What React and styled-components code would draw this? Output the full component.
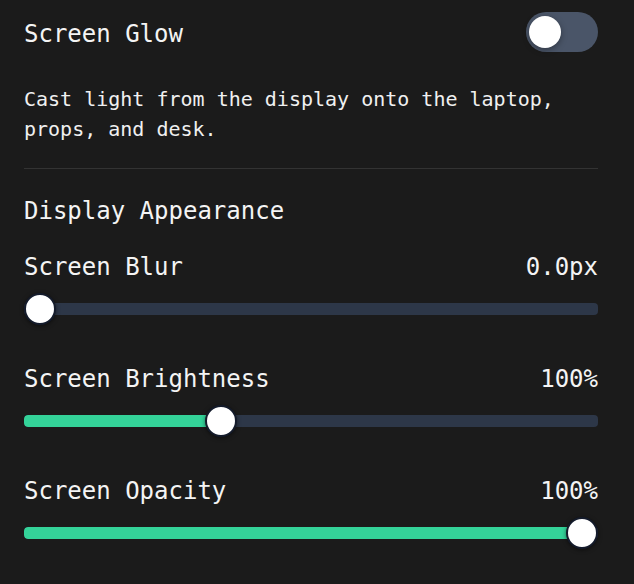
import React, { useState } from "react";
import styled, { createGlobalStyle } from "styled-components";

const Global = createGlobalStyle`
  html, body { margin: 0; padding: 0; background: #1b1b1b; }
  body { font-family: "DejaVu Sans Mono", "Liberation Mono", monospace; color: #f2f2f2; }
`;

const Panel = styled.div`
  width: 634px;
  min-height: 584px;
  box-sizing: border-box;
  padding: 12px 36px 0 24px;
  background: #1b1b1b;
  display: flex;
  flex-direction: column;
`;

const ToggleRow = styled.div`
  display: flex;
  align-items: center;
  justify-content: space-between;
  height: 40px;
`;

const Label = styled.span`
  font-size: 24px;
  line-height: 30px;
  color: #f4f4f4;
  white-space: pre;
`;

const ToggleLabel = styled(Label)`
  padding-top: 3px;
`;

const Switch = styled.button`
  position: relative;
  width: 72px;
  height: 40px;
  border-radius: 20px;
  border: none;
  padding: 0;
  background: ${(p) => (p.$on ? "#34d399" : "#4a5568")};
  cursor: pointer;
`;

const Knob = styled.span`
  position: absolute;
  top: 4px;
  left: ${(p) => (p.$on ? "36px" : "3px")};
  width: 32px;
  height: 32px;
  border-radius: 50%;
  background: #ffffff;
  box-shadow: 0 2px 6px rgba(0, 0, 0, 0.35);
`;

const Description = styled.p`
  margin: 32px 0 0;
  font-size: 20px;
  line-height: 30px;
  color: #f0f0f0;
`;

const Divider = styled.hr`
  margin: 24px 0 0;
  border: none;
  height: 1px;
  background: #333333;
`;

const SectionTitle = styled.h3`
  margin: 27px 0 0;
  font-weight: normal;
  font-size: 24px;
  line-height: 30px;
  color: #f4f4f4;
`;

const Group = styled.div`
  display: flex;
  flex-direction: column;
  margin-top: ${(p) => p.$top}px;
`;

const LabelRow = styled.div`
  display: flex;
  justify-content: space-between;
  align-items: center;
  height: 30px;
`;

const Value = styled.span`
  font-size: 24px;
  line-height: 30px;
  color: #f4f4f4;
`;

const SliderBox = styled.div`
  position: relative;
  height: 32px;
  margin-top: 11px;
  display: flex;
  align-items: center;
`;

const Track = styled.div`
  position: relative;
  width: 100%;
  height: 12px;
  border-radius: 4px;
  background: #2d3748;
  overflow: hidden;
`;

const Fill = styled.div`
  height: 100%;
  background: #34d399;
  border-radius: 4px 0 0 4px;
`;

const Thumb = styled.div`
  position: absolute;
  top: 0;
  width: 32px;
  height: 32px;
  box-sizing: border-box;
  border-radius: 50%;
  background: #ffffff;
  border: 2px solid #141b2b;
  box-shadow: 0 1px 4px rgba(0, 0, 0, 0.5);
  transform: translateX(-50%);
`;

const WIDTH = 574;
const THUMB = 32;

function Slider({ label, value, min, max, format, top }) {
  const frac = (value - min) / (max - min);
  const center = THUMB / 2 + (WIDTH - THUMB) * frac;
  return (
    <Group $top={top}>
      <LabelRow>
        <Label>{label}</Label>
        <Value>{format(value)}</Value>
      </LabelRow>
      <SliderBox>
        <Track>
          <Fill style={{ width: frac === 0 ? 0 : center }} />
        </Track>
        <Thumb style={{ left: center }} />
      </SliderBox>
    </Group>
  );
}

export default function App() {
  const [on, setOn] = useState(false);
  return (
    <>
      <Global />
      <Panel>
        <ToggleRow>
          <ToggleLabel>Screen Glow</ToggleLabel>
          <Switch $on={on} onClick={() => setOn(!on)} aria-label="Screen Glow">
            <Knob $on={on} />
          </Switch>
        </ToggleRow>
        <Description>
          Cast light from the display onto the laptop,
          <br />
          props, and desk.
        </Description>
        <Divider />
        <SectionTitle>Display Appearance</SectionTitle>
        <Slider label="Screen Blur" value={0} min={0} max={10} format={(v) => `${v.toFixed(1)}px`} top={26} />
        <Slider label="Screen Brightness" value={100} min={0} max={300} format={(v) => `${v}%`} top={39} />
        <Slider label="Screen Opacity" value={100} min={0} max={100} format={(v) => `${v}%`} top={39} />
      </Panel>
    </>
  );
}
